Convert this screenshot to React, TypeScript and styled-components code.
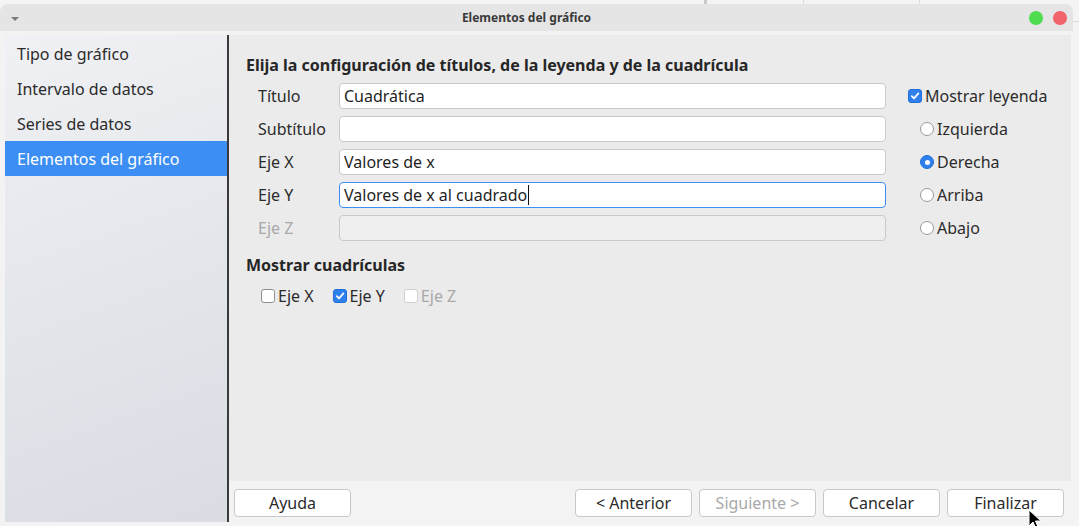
import { createGlobalStyle } from "styled-components";
import styled from "styled-components";

const GlobalStyle = createGlobalStyle`
  html, body {
    margin: 0;
    padding: 0;
  }
  body {
    width: 1079px;
    height: 526px;
    overflow: hidden;
    font-family: "Noto Sans", "Open Sans", sans-serif;
    color: #2b2b2b;
    background-color: #f4f4f4;
    background-image:
      linear-gradient(90deg, transparent 704px, #c9c9c9 704px, #c9c9c9 707px, transparent 707px),
      linear-gradient(90deg, transparent 803px, #dcdcdc 803px, #dcdcdc 804px, transparent 804px),
      linear-gradient(90deg, transparent 919px, #dcdcdc 919px, #dcdcdc 920px, transparent 920px),
      linear-gradient(180deg, transparent 21px, #dcdcdc 21px, #dcdcdc 22px, transparent 22px);
  }
`;

const Window = styled.div`
  margin-top: 4px;
  width: 1073px;
  height: 522px;
  border-radius: 8px 8px 0 0;
  overflow: hidden;
  background: #f3f3f3;
  display: flex;
  flex-direction: column;
  position: relative;
`;

const TitleBar = styled.div`
  height: 27px;
  flex-shrink: 0;
  background: #e5e5e5;
  display: flex;
  align-items: center;
  padding: 0 6px 0 11px;
`;

const MenuArrow = styled.div`
  width: 0;
  height: 0;
  border-left: 4px solid transparent;
  border-right: 4px solid transparent;
  border-top: 4px solid #7a7a7a;
  margin-top: 2px;
`;

const Title = styled.div`
  flex: 1;
  text-align: center;
  font-size: 12px;
  font-weight: 700;
  color: #3a3a3a;
  padding-left: 5px;
`;

const Dots = styled.div`
  display: flex;
  gap: 10px;
`;

const Dot = styled.div<{ $color: string }>`
  width: 14px;
  height: 14px;
  border-radius: 50%;
  background: ${(p) => p.$color};
`;

const Body = styled.div`
  flex: 1;
  display: flex;
  padding: 4px 2px 4px 5px;
  min-height: 0;
`;

const Sidebar = styled.div`
  width: 222px;
  flex-shrink: 0;
  background: linear-gradient(160deg, #f0f1f4 0%, #e3e6eb 50%, #d9dde3 100%);
  border-right: 2px solid #3a3a3a;
  display: flex;
  flex-direction: column;
  padding-top: 1px;
`;

const NavItem = styled.div<{ $active?: boolean }>`
  height: 35px;
  display: flex;
  align-items: center;
  padding-left: 12px;
  font-size: 16px;
  color: ${(p) => (p.$active ? "#ffffff" : "#2b2b2b")};
  background: ${(p) => (p.$active ? "#3d8ef4" : "transparent")};
`;

const Main = styled.div`
  flex: 1;
  display: flex;
  flex-direction: column;
`;

const Panel = styled.div`
  flex: 1;
  background: #ebebeb;
  padding: 18px 0 0 17px;
`;

const Heading = styled.div`
  font-size: 16px;
  font-weight: 700;
  color: #262626;
  height: 24px;
  line-height: 24px;
`;

const FieldGrid = styled.div`
  display: grid;
  grid-template-columns: 81px 547px 1fr;
  grid-auto-rows: 26px;
  row-gap: 7px;
  column-gap: 0;
  padding-left: 12px;
  margin-top: 6px;
`;

const Label = styled.div<{ $disabled?: boolean }>`
  font-size: 16px;
  display: flex;
  align-items: center;
  color: ${(p) => (p.$disabled ? "#a8a8a8" : "#2b2b2b")};
`;

const TextBox = styled.div<{ $focused?: boolean; $disabled?: boolean }>`
  box-sizing: border-box;
  height: 26px;
  border-radius: 4px;
  border: 1px solid ${(p) => (p.$focused ? "#3d8ef4" : "#c9c9c9")};
  background: ${(p) => (p.$disabled ? "#efefef" : "#ffffff")};
  font-size: 16px;
  display: flex;
  align-items: center;
  padding-left: 4px;
  color: #1f1f1f;
`;

const Caret = styled.span`
  display: inline-block;
  width: 1px;
  height: 20px;
  background: #111;
  margin-left: 1px;
`;

const Option = styled.div<{ $indent?: number; $disabled?: boolean }>`
  display: flex;
  align-items: center;
  gap: 3px;
  font-size: 16px;
  padding-left: ${(p) => p.$indent ?? 0}px;
  color: ${(p) => (p.$disabled ? "#a8a8a8" : "#2b2b2b")};
`;

const Box = styled.span<{ $checked?: boolean; $disabled?: boolean }>`
  box-sizing: border-box;
  width: 14px;
  height: 14px;
  border-radius: 3px;
  flex-shrink: 0;
  border: 1px solid ${(p) => (p.$checked ? "#1f6fd6" : p.$disabled ? "#d0d0d0" : "#8f8f8f")};
  background: ${(p) => (p.$checked ? "#2f80ed" : "#ffffff")};
  display: flex;
  align-items: center;
  justify-content: center;
`;

const Radio = styled.span<{ $checked?: boolean }>`
  box-sizing: border-box;
  width: 14px;
  height: 14px;
  border-radius: 50%;
  flex-shrink: 0;
  border: 1px solid ${(p) => (p.$checked ? "#1f6fd6" : "#9a9a9a")};
  background: ${(p) => (p.$checked ? "#2f80ed" : "#ffffff")};
  display: flex;
  align-items: center;
  justify-content: center;
  &::after {
    content: "";
    display: ${(p) => (p.$checked ? "block" : "none")};
    width: 5px;
    height: 5px;
    border-radius: 50%;
    background: #fff;
  }
`;

const LegendCell = styled.div`
  display: flex;
  align-items: center;
  padding-left: 22px;
`;

const GridSection = styled.div`
  margin-top: 12px;
`;

const CheckRow = styled.div`
  display: flex;
  align-items: center;
  gap: 19px;
  padding-left: 15px;
  margin-top: 8px;
  height: 22px;
`;

const ButtonBar = styled.div`
  height: 38px;
  flex-shrink: 0;
  display: flex;
  align-items: center;
  padding: 3px 7px 0 5px;
  gap: 7px;
`;

const Spacer = styled.div`
  flex: 1;
`;

const Button = styled.div<{ $disabled?: boolean }>`
  box-sizing: border-box;
  width: 117px;
  height: 28px;
  border-radius: 4px;
  border: 1px solid #c8c8c8;
  background: #ffffff;
  display: flex;
  align-items: center;
  justify-content: center;
  font-size: 16px;
  color: ${(p) => (p.$disabled ? "#a8a8a8" : "#2b2b2b")};
`;

const Cursor = styled.svg`
  position: absolute;
  left: 1028px;
  top: 505px;
`;

const Check = () => (
  <svg width="10" height="10" viewBox="0 0 10 10">
    <path d="M1.8 5.2 L4 7.4 L8.4 2.4" fill="none" stroke="#fff" strokeWidth="1.7" strokeLinecap="round" strokeLinejoin="round" />
  </svg>
);

const rows = [
  { label: "Título", value: "Cuadrática" },
  { label: "Subtítulo", value: "" },
  { label: "Eje X", value: "Valores de x" },
  { label: "Eje Y", value: "Valores de x al cuadrado", focused: true },
  { label: "Eje Z", value: "", disabled: true },
];

const legend = [
  { name: "Izquierda", checked: false },
  { name: "Derecha", checked: true },
  { name: "Arriba", checked: false },
  { name: "Abajo", checked: false },
];

export default function App() {
  return (
    <>
      <GlobalStyle />
      <Window>
        <TitleBar>
          <MenuArrow />
          <Title>Elementos del gráfico</Title>
          <Dots>
            <Dot $color="#4fdc4f" />
            <Dot $color="#f2636b" />
          </Dots>
        </TitleBar>
        <Body>
          <Sidebar>
            <NavItem>Tipo de gráfico</NavItem>
            <NavItem>Intervalo de datos</NavItem>
            <NavItem>Series de datos</NavItem>
            <NavItem $active>Elementos del gráfico</NavItem>
          </Sidebar>
          <Main>
            <Panel>
              <Heading>Elija la configuración de títulos, de la leyenda y de la cuadrícula</Heading>
              <FieldGrid>
                {rows.map((r, i) => (
                  <>
                    <Label key={"l" + i} $disabled={r.disabled}>{r.label}</Label>
                    <TextBox key={"t" + i} $focused={r.focused} $disabled={r.disabled}>
                      {r.value}
                      {r.focused && <Caret />}
                    </TextBox>
                    {i === 0 ? (
                      <LegendCell key={"c" + i}>
                        <Option>
                          <Box $checked>
                            <Check />
                          </Box>
                          Mostrar leyenda
                        </Option>
                      </LegendCell>
                    ) : (
                      <LegendCell key={"c" + i}>
                        <Option $indent={12}>
                          <Radio $checked={legend[i - 1].checked} />
                          {legend[i - 1].name}
                        </Option>
                      </LegendCell>
                    )}
                  </>
                ))}
              </FieldGrid>
              <GridSection>
                <Heading>Mostrar cuadrículas</Heading>
                <CheckRow>
                  <Option>
                    <Box />
                    Eje X
                  </Option>
                  <Option>
                    <Box $checked>
                      <Check />
                    </Box>
                    Eje Y
                  </Option>
                  <Option $disabled>
                    <Box $disabled />
                    Eje Z
                  </Option>
                </CheckRow>
              </GridSection>
            </Panel>
            <ButtonBar>
              <Button>Ayuda</Button>
              <Spacer />
              <Button>&lt; Anterior</Button>
              <Button $disabled>Siguiente &gt;</Button>
              <Button>Cancelar</Button>
              <Button>Finalizar</Button>
            </ButtonBar>
          </Main>
        </Body>
        <Cursor width="14" height="22" viewBox="0 0 14 22">
          <path d="M1 1 L1 17 L5 13 L8 20 L10.5 19 L7.5 12 L13 12 Z" fill="#000" stroke="#fff" strokeWidth="1" />
        </Cursor>
      </Window>
    </>
  );
}
